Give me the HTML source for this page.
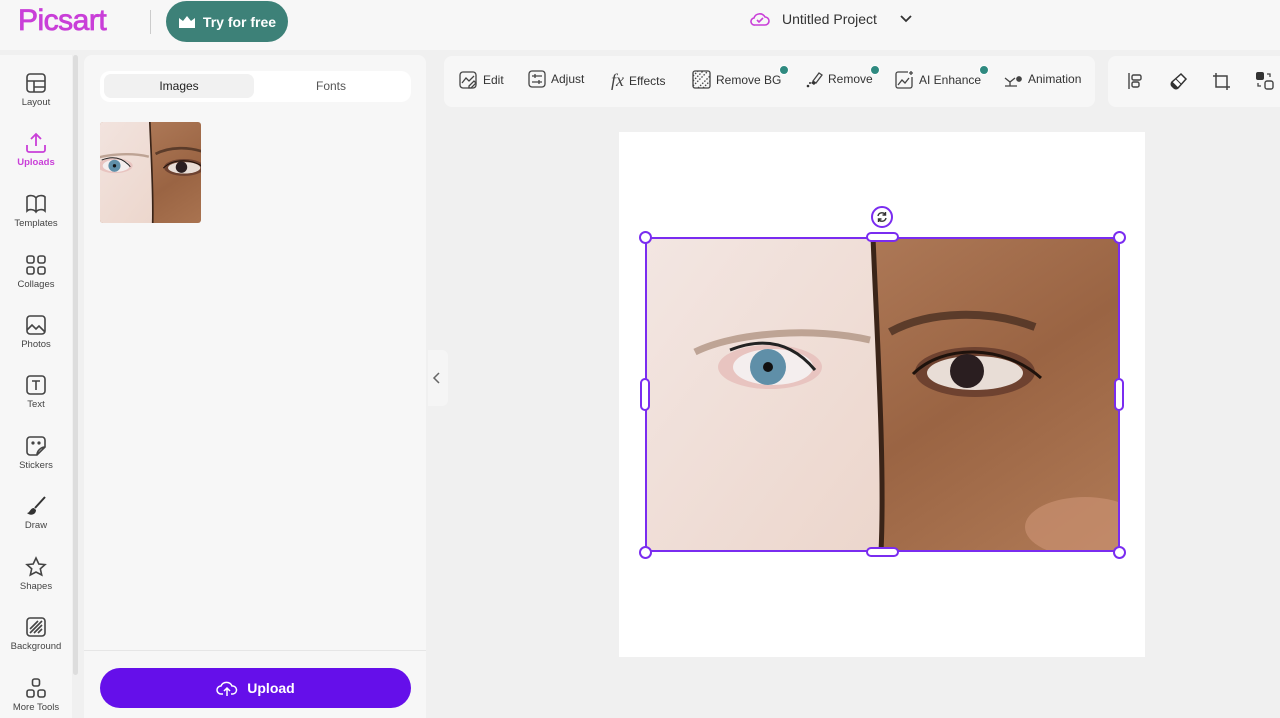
<!DOCTYPE html>
<html><head><meta charset="utf-8"><style>
*{box-sizing:border-box;margin:0;padding:0}
body{width:1280px;height:718px;overflow:hidden;background:#f0f0f0;font-family:"Liberation Sans",sans-serif;position:relative;color:#333}
.abs{position:absolute}
.top{left:0;top:0;width:1280px;height:50px;background:#f7f7f7}
.logo{left:18px;top:4px;font-size:30px;color:#c93fd8;letter-spacing:-0.5px;-webkit-text-stroke:0.8px #c93fd8}
.try{left:166px;top:1px;width:122px;height:41px;border-radius:21px;background:#3d8178;color:#fff;font-size:14px;font-weight:bold;display:flex;align-items:center;justify-content:center;gap:7px}
.rail{left:0;top:55px;width:72px;height:663px;background:#f7f7f7}
.ri{position:absolute;left:0;width:72px;text-align:center;font-size:9.5px;color:#444}
.ri svg{display:block;margin:0 auto 3px}
.panel{left:84px;top:55px;width:342px;height:663px;background:#f7f7f7;border-radius:8px 8px 0 0}
.tb{left:444px;top:56px;width:651px;height:51px;background:#f7f7f7;border-radius:8px}
.tb2{left:1108px;top:56px;width:172px;height:51px;background:#f7f7f7;border-radius:8px 0 0 8px}
.ti{position:absolute;top:70px;font-size:12px;color:#333;display:flex;align-items:center;gap:5px}
.dot{position:absolute;width:10px;height:10px;border-radius:5px;background:#2f8a80;border:1.5px solid #fff}
.h{position:absolute;background:#fff;border:2px solid #7a2cf0}
</style></head><body>
<div class="abs top"></div>
<div class="abs logo">Picsart</div>
<div class="abs" style="left:150px;top:10px;width:1px;height:24px;background:#ccc"></div>
<div class="abs try"><svg width="18" height="14" viewBox="0 0 18 14"><path d="M1 3l4 3 4-5 4 5 4-3v10H1z" fill="#fff"/></svg>Try for free</div>
<div class="abs" style="left:750px;top:11px;display:flex;align-items:center;gap:12px;font-size:14px;color:#333">
<svg width="20" height="16" viewBox="0 0 20 16"><path d="M5 14h10a4 4 0 0 0 0-8 6 6 0 0 0-11 1 3.5 3.5 0 0 0 1 7z" fill="none" stroke="#c93fd8" stroke-width="1.6"/><path d="M7 9l2 2 4-4" fill="none" stroke="#c93fd8" stroke-width="1.6"/></svg>
Untitled Project<svg style="margin-left:10px" width="14" height="10" viewBox="0 0 14 10"><path d="M2 2l5 5 5-5" fill="none" stroke="#333" stroke-width="1.8"/></svg></div>

<div class="abs rail"></div>
<div class="abs" style="left:73px;top:55px;width:5px;height:620px;background:#ddd;border-radius:3px"></div>
<div class="ri" style="top:72px"><svg width="22" height="22" viewBox="0 0 22 22" fill="none" stroke="#444" stroke-width="1.6"><rect x="2" y="2" width="18" height="18" rx="3"/><path d="M2 9h18M9 9v11M9 15h11"/></svg>Layout</div>
<div class="ri" style="top:132px;color:#c93fd8;font-weight:bold"><svg width="22" height="22" viewBox="0 0 22 22" fill="none" stroke="#c93fd8" stroke-width="1.8"><path d="M11 14V2M6 7l5-5 5 5M2 13v5a2 2 0 0 0 2 2h14a2 2 0 0 0 2-2v-5"/></svg>Uploads</div>
<div class="ri" style="top:193px"><svg width="22" height="22" viewBox="0 0 22 22" fill="none" stroke="#444" stroke-width="1.6"><path d="M11 5C9 2 4 2 2 4v14c2-2 7-2 9 1 2-3 7-3 9-1V4c-2-2-7-2-9 1zM11 5v14"/></svg>Templates</div>
<div class="ri" style="top:254px"><svg width="22" height="22" viewBox="0 0 22 22" fill="none" stroke="#444" stroke-width="1.6"><rect x="2" y="2" width="7" height="7" rx="2"/><rect x="13" y="2" width="7" height="7" rx="2"/><rect x="2" y="13" width="7" height="7" rx="2"/><rect x="13" y="13" width="7" height="7" rx="2"/></svg>Collages</div>
<div class="ri" style="top:314px"><svg width="22" height="22" viewBox="0 0 22 22" fill="none" stroke="#444" stroke-width="1.6"><rect x="2" y="2" width="18" height="18" rx="3"/><path d="M2 16l5-5 4 4 3-3 6 6"/></svg>Photos</div>
<div class="ri" style="top:374px"><svg width="22" height="22" viewBox="0 0 22 22" fill="none" stroke="#444" stroke-width="1.6"><rect x="2" y="2" width="18" height="18" rx="3"/><path d="M7 7h8M11 7v9"/></svg>Text</div>
<div class="ri" style="top:435px"><svg width="22" height="22" viewBox="0 0 22 22" fill="none" stroke="#444" stroke-width="1.6"><path d="M20 12V5a3 3 0 0 0-3-3H5a3 3 0 0 0-3 3v12a3 3 0 0 0 3 3h7zM12 20c0-4 4-8 8-8"/><circle cx="8" cy="8" r=".8"/><circle cx="14" cy="8" r=".8"/></svg>Stickers</div>
<div class="ri" style="top:495px"><svg width="22" height="22" viewBox="0 0 22 22"><path d="M20 2L10 13" stroke="#333" stroke-width="2"/><path d="M9 13c-4 0-4 5-7 5 3 3 9 2 9-3z" fill="#333"/></svg>Draw</div>
<div class="ri" style="top:556px"><svg width="22" height="22" viewBox="0 0 22 22" fill="none" stroke="#444" stroke-width="1.6"><path d="M11 2l2.8 6 6.2.6-4.7 4.2 1.4 6.2L11 16l-5.7 3 1.4-6.2L2 8.6 8.2 8z"/></svg>Shapes</div>
<div class="ri" style="top:616px"><svg width="22" height="22" viewBox="0 0 22 22" fill="none" stroke="#444" stroke-width="1.6"><rect x="2" y="2" width="18" height="18" rx="3"/><path d="M5 13l8-8M5 17l12-12M9 17l8-8M13 17l4-4"/></svg>Background</div>
<div class="ri" style="top:677px"><svg width="22" height="22" viewBox="0 0 22 22" fill="none" stroke="#444" stroke-width="1.6"><rect x="7.5" y="2" width="7" height="7" rx="2"/><rect x="2" y="13" width="7" height="7" rx="2"/><rect x="13" y="13" width="7" height="7" rx="2"/></svg>More Tools</div>

<div class="abs panel"></div>
<div class="abs" style="left:100px;top:71px;width:311px;height:31px;background:#fff;border-radius:10px"></div>
<div class="abs" style="left:104px;top:74px;width:150px;height:24px;background:#f1f1f1;border-radius:7px;font-size:12px;color:#222;text-align:center;line-height:24px">Images</div>
<div class="abs" style="left:256px;top:74px;width:150px;height:24px;font-size:12px;color:#555;text-align:center;line-height:24px">Fonts</div>
<svg class="abs" style="left:100px;top:122px;border-radius:3px" width="101" height="101" viewBox="80 0 300 300"><use href="#photo" width="474" height="315"/></svg>
<div class="abs" style="left:84px;top:650px;width:342px;height:1px;background:#e6e6e6"></div>
<div class="abs" style="left:100px;top:668px;width:311px;height:40px;border-radius:20px;background:#650fea;color:#fff;font-size:14px;font-weight:bold;display:flex;align-items:center;justify-content:center;gap:9px"><svg width="22" height="18" viewBox="0 0 22 18" fill="none" stroke="#fff" stroke-width="1.5"><path d="M7 15H5a4 4 0 0 1 0-8 6 6 0 0 1 11 0 4 4 0 0 1 1 8h-2M11 17V9M8 12l3-3 3 3"/></svg>Upload</div>
<div class="abs" style="left:428px;top:350px;width:20px;height:56px;background:#f5f5f5;border-radius:0 6px 6px 0"></div>
<svg class="abs" style="left:432px;top:371px" width="10" height="14" viewBox="0 0 10 14"><path d="M7 2L2 7l5 5" fill="none" stroke="#666" stroke-width="1.5"/></svg>

<div class="abs tb"></div>
<div class="abs tb2"></div>
<div class="ti" style="left:459px"><svg width="19" height="19" viewBox="0 0 19 19" fill="none" stroke="#444" stroke-width="1.3"><rect x="1" y="2" width="16" height="16" rx="3"/><path d="M3 13l4-5 3 3 5-5M10 16l5-5 2 2-5 5h-2z"/></svg>Edit</div>
<div class="ti" style="left:528px"><svg width="18" height="18" viewBox="0 0 18 18" fill="none" stroke="#444" stroke-width="1.3"><rect x="1" y="1" width="16" height="16" rx="3"/><path d="M4 6h10M4 12h10M7 4v4M11 10v4"/></svg>Adjust</div>
<div class="ti" style="left:611px"><span style="font-family:'Liberation Serif',serif;font-style:italic;font-size:18px;color:#444">fx</span>Effects</div>
<div class="ti" style="left:692px"><svg width="19" height="19" viewBox="0 0 19 19" fill="none" stroke="#444" stroke-width="1.3"><rect x="1" y="1" width="17" height="17" rx="2"/><path d="M1 6l5-5M1 11l10-10M1 16l15-15M6 18L18 6M11 18l7-7" stroke-dasharray="1.5 1.5"/></svg>Remove BG</div>
<div class="dot" style="left:779px;top:65px"></div>
<div class="ti" style="left:805px"><svg width="18" height="18" viewBox="0 0 18 18"><path d="M8 11l6-8 3 2-6 8z" fill="none" stroke="#444" stroke-width="1.3"/><path d="M8 11l3 2-2 2-3-2z" fill="#333"/><circle cx="3" cy="16" r="1.3" fill="#333"/><circle cx="5" cy="13" r="1" fill="#333"/></svg>Remove</div>
<div class="dot" style="left:870px;top:65px"></div>
<div class="ti" style="left:895px"><svg width="19" height="19" viewBox="0 0 19 19" fill="none" stroke="#444" stroke-width="1.3"><path d="M13 2H3a2 2 0 0 0-2 2v12a2 2 0 0 0 2 2h12a2 2 0 0 0 2-2V7M3 15l4-5 3 3 4-5"/><path d="M16 1v4M14 3h4"/></svg>AI Enhance</div>
<div class="dot" style="left:979px;top:65px"></div>
<div class="ti" style="left:1003px"><svg width="20" height="18" viewBox="0 0 20 18" fill="none" stroke="#444" stroke-width="1.3"><path d="M2 8l5 4 5-4M7 12v4M2 16h12"/><circle cx="16" cy="9" r="2.2" fill="#444"/></svg>Animation</div>
<svg class="abs" style="left:1127px;top:72px" width="18" height="18" viewBox="0 0 18 18" fill="none" stroke="#444" stroke-width="1.4"><path d="M2 1v16"/><rect x="5" y="3" width="9" height="5" rx="1.5"/><rect x="5" y="10" width="7" height="5" rx="1.5"/></svg>
<svg class="abs" style="left:1170px;top:72px" width="18" height="18" viewBox="0 0 18 18"><path d="M11 2l5 5-8 9a3 3 0 0 1-4 0L2 14a3 3 0 0 1 0-4z" fill="#fff" stroke="#333" stroke-width="1.5"/><path d="M2 10l6 6a3 3 0 0 1-4 0L2 14a3 3 0 0 1 0-4zM6 7l5 5" fill="#333" stroke="#333"/></svg>
<svg class="abs" style="left:1212px;top:72px" width="19" height="19" viewBox="0 0 19 19" fill="none" stroke="#444" stroke-width="1.5"><path d="M4 1v14h14M1 4h14v14"/></svg>
<svg class="abs" style="left:1255px;top:71px" width="19" height="19" viewBox="0 0 19 19"><rect x="1" y="1" width="8" height="8" rx="2" fill="#333"/><rect x="10" y="10" width="8" height="8" rx="2" fill="none" stroke="#444" stroke-width="1.4"/><path d="M12 3h3v3M3 12v3h3" fill="none" stroke="#444" stroke-width="1.3"/></svg>

<div class="abs" style="left:619px;top:132px;width:526px;height:525px;background:#fff"></div>
<svg class="abs" style="left:645px;top:237px" width="474" height="315" viewBox="0 0 474 315">
<defs>
<symbol id="photo" viewBox="0 0 474 315">
<linearGradient id="ls" x1="0" x2="1" y1="0" y2="1"><stop offset="0" stop-color="#f3e6e2"/><stop offset="1" stop-color="#ecd6cc"/></linearGradient>
<linearGradient id="rs" x1="0" x2="1" y1="0" y2="1"><stop offset="0" stop-color="#b98563"/><stop offset=".6" stop-color="#9a6443"/><stop offset="1" stop-color="#b07a56"/></linearGradient>
<rect width="474" height="315" fill="url(#rs)"/>
<path d="M0 0h228c4 100 12 230 8 315H0z" fill="url(#ls)"/>
<path d="M228 0c4 100 12 230 8 315" stroke="#3a2418" stroke-width="5" fill="none"/>
<path d="M50 115c40-20 120-25 175-12" stroke="#a88a78" stroke-width="7" fill="none" opacity=".7"/>
<ellipse cx="125" cy="130" rx="52" ry="22" fill="#e8c4c0"/>
<ellipse cx="128" cy="130" rx="40" ry="18" fill="#f4eeee"/>
<circle cx="123" cy="130" r="18" fill="#5f8fa8"/>
<circle cx="123" cy="130" r="5" fill="#111"/>
<path d="M85 113c30-12 60-10 85 20" stroke="#222" stroke-width="3" fill="none"/>
<path d="M245 95c40-22 100-22 145 -5" stroke="#4a3022" stroke-width="8" fill="none" opacity=".8"/>
<ellipse cx="330" cy="135" rx="60" ry="25" fill="#6e4230"/>
<ellipse cx="330" cy="136" rx="48" ry="17" fill="#e8ddd6"/>
<circle cx="322" cy="134" r="17" fill="#2a1e20"/>
<path d="M268 137c30-30 90-30 128 4" stroke="#1e120c" stroke-width="3" fill="none"/>
<ellipse cx="440" cy="290" rx="60" ry="30" fill="#c99070" opacity=".7"/>
</symbol>
</defs>
<use href="#photo" width="474" height="315"/>
</svg>
<div class="abs" style="left:645px;top:237px;width:475px;height:315px;border:2px solid #7a2cf0"></div>
<div class="h" style="left:639px;top:231px;width:13px;height:13px;border-radius:50%"></div>
<div class="h" style="left:1113px;top:231px;width:13px;height:13px;border-radius:50%"></div>
<div class="h" style="left:639px;top:546px;width:13px;height:13px;border-radius:50%"></div>
<div class="h" style="left:1113px;top:546px;width:13px;height:13px;border-radius:50%"></div>
<div class="h" style="left:866px;top:232px;width:33px;height:10px;border-radius:5px"></div>
<div class="h" style="left:866px;top:547px;width:33px;height:10px;border-radius:5px"></div>
<div class="h" style="left:640px;top:378px;width:10px;height:33px;border-radius:5px"></div>
<div class="h" style="left:1114px;top:378px;width:10px;height:33px;border-radius:5px"></div>
<div class="h" style="left:871px;top:206px;width:22px;height:22px;border-radius:50%;display:flex;align-items:center;justify-content:center"><svg width="12" height="12" viewBox="0 0 12 12" fill="none" stroke="#333" stroke-width="1.4"><path d="M2 5a4 4 0 0 1 7.5-1M10 7a4 4 0 0 1-7.5 1M9.5 1v3h-3M2.5 11V8h3"/></svg></div>
</body></html>
